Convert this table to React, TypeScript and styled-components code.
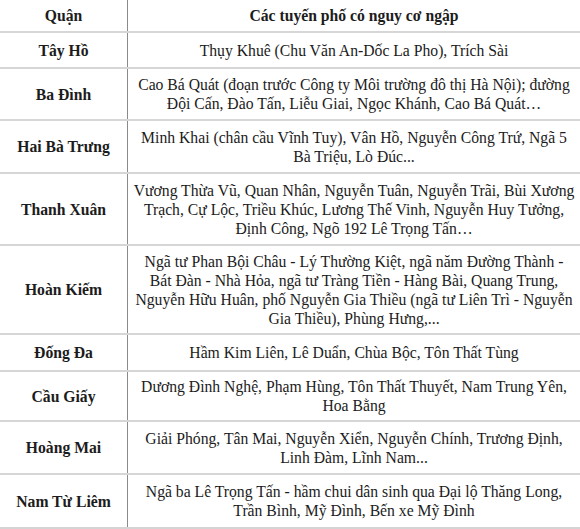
import React from "react";
import styled, { createGlobalStyle } from "styled-components";

const GlobalStyle = createGlobalStyle`
    html, body {
        margin: 0;
        padding: 0;
        background: #fff;
    }
`;

type Row = { district: string; streets: string[]; h: number };

const rows: Row[] = [
    { district: "Tây Hồ", streets: ["Thụy Khuê (Chu Văn An-Dốc La Pho), Trích Sài"], h: 36 },
    {
        district: "Ba Đình",
        streets: [
            "Cao Bá Quát (đoạn trước Công ty Môi trường đô thị Hà Nội); đường",
            "Đội Cấn, Đào Tấn, Liễu Giai, Ngọc Khánh, Cao Bá Quát…",
        ],
        h: 52,
    },
    {
        district: "Hai Bà Trưng",
        streets: ["Minh Khai (chân cầu Vĩnh Tuy), Vân Hồ, Nguyễn Công Trứ, Ngã 5", "Bà Triệu, Lò Đúc..."],
        h: 53,
    },
    {
        district: "Thanh Xuân",
        streets: [
            "Vương Thừa Vũ, Quan Nhân, Nguyễn Tuân, Nguyễn Trãi, Bùi Xương",
            "Trạch, Cự Lộc, Triều Khúc, Lương Thế Vinh, Nguyễn Huy Tưởng,",
            "Định Công, Ngõ 192 Lê Trọng Tấn…",
        ],
        h: 72,
    },
    {
        district: "Hoàn Kiếm",
        streets: [
            "Ngã tư Phan Bội Châu - Lý Thường Kiệt, ngã năm Đường Thành -",
            "Bát Đàn - Nhà Hỏa, ngã tư Tràng Tiền - Hàng Bài, Quang Trung,",
            "Nguyễn Hữu Huân, phố Nguyễn Gia Thiều (ngã tư Liên Trì - Nguyễn",
            "Gia Thiều), Phùng Hưng,...",
        ],
        h: 89,
    },
    { district: "Đống Đa", streets: ["Hầm Kim Liên, Lê Duẩn, Chùa Bộc, Tôn Thất Tùng"], h: 37 },
    {
        district: "Cầu Giấy",
        streets: ["Dương Đình Nghệ, Phạm Hùng, Tôn Thất Thuyết, Nam Trung Yên,", "Hoa Bằng"],
        h: 50,
    },
    {
        district: "Hoàng Mai",
        streets: ["Giải Phóng, Tân Mai, Nguyễn Xiển, Nguyễn Chính, Trương Định,", "Linh Đàm, Lĩnh Nam..."],
        h: 53,
    },
    {
        district: "Nam Từ Liêm",
        streets: [
            "Ngã ba Lê Trọng Tấn - hầm chui dân sinh qua Đại lộ Thăng Long,",
            "Trần Bình, Mỹ Đình, Bến xe Mỹ Đình",
        ],
        h: 52,
    },
];

export default function App() {
    return (
        <>
            <GlobalStyle />
            <Table>
                <TableRow $h={33}>
                    <HeadCell>Quận</HeadCell>
                    <HeadCell>Các tuyến phố có nguy cơ ngập</HeadCell>
                </TableRow>
                {rows.map((r) => (
                    <TableRow key={r.district} $h={r.h}>
                        <DistrictCell>{r.district}</DistrictCell>
                        <StreetCell>
                            {r.streets.map((s) => (
                                <Line key={s}>{s}</Line>
                            ))}
                        </StreetCell>
                    </TableRow>
                ))}
            </Table>
        </>
    );
}

const Table = styled.div`
    width: 580px;
    display: flex;
    flex-direction: column;
    font-family: "Liberation Serif", "Times New Roman", serif;
    font-size: 15.7px;
    color: #1c1c1c;
    border-bottom: 2px solid #d4d4d4;
`;

const TableRow = styled.div<{ $h: number }>`
    display: grid;
    grid-template-columns: 128px 1fr;
    height: ${(p) => p.$h}px;
    box-sizing: border-box;
    border-bottom: 2px solid #d6d6d6;

    &:last-child {
        border-bottom: none;
    }
`;

const Cell = styled.div`
    display: flex;
    flex-direction: column;
    align-items: center;
    justify-content: center;
    text-align: center;
    line-height: 19px;
`;

const HeadCell = styled(Cell)`
    font-weight: bold;
    &:first-child {
        border-right: 1px solid #8a8a8a;
    }
`;

const DistrictCell = styled(Cell)`
    font-weight: bold;
    border-right: 1px solid #8a8a8a;
`;

const StreetCell = styled(Cell)``;

const Line = styled.div`
    white-space: nowrap;
`;
